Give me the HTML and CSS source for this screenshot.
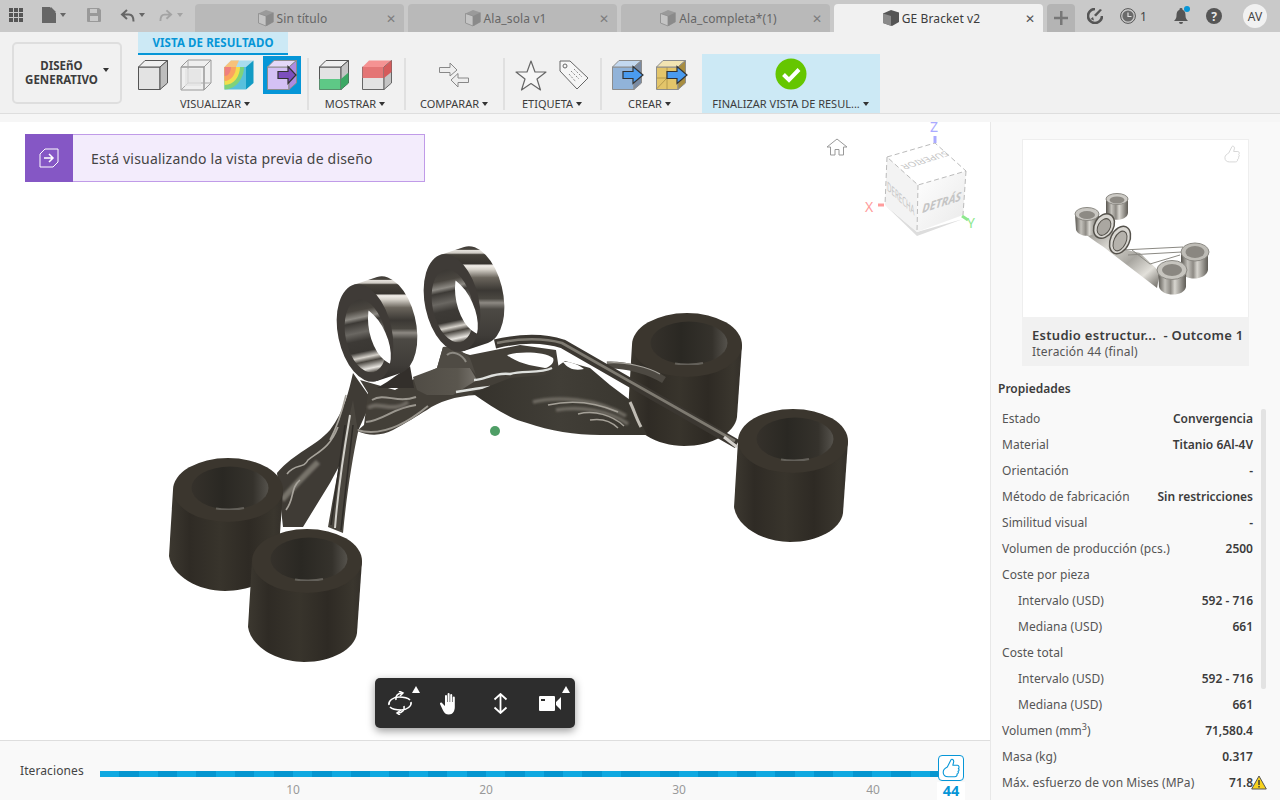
FILE: index.html
```html
<!DOCTYPE html>
<html lang="es">
<head>
<meta charset="utf-8">
<title>GE Bracket v2</title>
<link rel="stylesheet" href="styles.css">
</head>
<body>
<svg class="defs" width="0" height="0" aria-hidden="true">
  <defs>
    <symbol id="doc3d" viewBox="0 0 18 18"><path d="M9 1 16.500 3.500V13L10 17 1.500 14V4.500Z" fill="#9a9a9a"/><path d="M1.500 4.500 9 7V17L1.500 14Z" fill="#c4c4c4" stroke="#8d8d8d" stroke-width=".8"/><path d="M9 7 16.500 3.500V13L9 17Z" fill="#8a8a8a"/></symbol>
    <symbol id="thumb" viewBox="0 0 24 24"><path d="M8 11 12 3C13 1.800 15 3 15 5L14 9H19C21 9 21.200 12 20 12.500 21.200 13.500 21 15.500 19.500 15.500 20.500 16.500 20 18.500 18.500 18.500 19 20 18 21.500 16 21.500H9C6 21.500 3.500 20 3.500 16.500 3.500 13.500 6 12 8 11Z" fill="none" stroke="currentColor" stroke-width="1.200" stroke-linejoin="round"/></symbol>
    <linearGradient id="cylSide" x1="0" x2="1" y1="0" y2="0">
      <stop offset="0" stop-color="#3c3830"/><stop offset=".18" stop-color="#2f2b25"/><stop offset=".45" stop-color="#38342c"/><stop offset=".7" stop-color="#2e2a24"/><stop offset=".92" stop-color="#3a362e"/><stop offset="1" stop-color="#34302a"/>
    </linearGradient>
    <linearGradient id="holeIn" x1="0" x2="1" y1="0" y2="0">
      <stop offset="0" stop-color="#35312b"/><stop offset=".4" stop-color="#2a2823"/><stop offset=".8" stop-color="#35322c"/><stop offset="1" stop-color="#55524c"/>
    </linearGradient>
    <linearGradient id="band" x1="0" x2="0" y1="0" y2="1">
      <stop offset="0" stop-color="#3d3934"/><stop offset=".03" stop-color="#4a463f"/><stop offset=".04" stop-color="#e4e0da"/><stop offset=".065" stop-color="#cfcbc4"/><stop offset=".08" stop-color="#45413a"/><stop offset=".165" stop-color="#38342f"/><stop offset=".185" stop-color="#f2eee8"/><stop offset=".22" stop-color="#d8d4cc"/><stop offset=".3" stop-color="#6a655c"/><stop offset=".42" stop-color="#3b3834"/><stop offset=".5" stop-color="#4a4741"/><stop offset=".54" stop-color="#8d8983"/><stop offset=".6" stop-color="#4c4944"/><stop offset=".85" stop-color="#3f3c38"/><stop offset="1" stop-color="#2f2c29"/>
    </linearGradient>
    <linearGradient id="inner" x1="0" x2="0" y1="0" y2="1">
      <stop offset="0" stop-color="#3c3935"/><stop offset=".14" stop-color="#4a4640"/><stop offset=".24" stop-color="#8d8a84"/><stop offset=".3" stop-color="#3d3a36"/><stop offset=".44" stop-color="#6a6762"/><stop offset=".55" stop-color="#3d3a36"/><stop offset=".7" stop-color="#3a3733"/><stop offset=".78" stop-color="#d5d1ca"/><stop offset=".84" stop-color="#4a4640"/><stop offset=".94" stop-color="#e8e5e0"/><stop offset="1" stop-color="#55514b"/>
    </linearGradient>
    <linearGradient id="wing" x1="0" x2="1" y1="0" y2="0">
      <stop offset="0" stop-color="#35322c"/><stop offset=".5" stop-color="#413e37"/><stop offset="1" stop-color="#38352e"/>
    </linearGradient>
    <linearGradient id="plate" x1="0" x2="1" y1="0" y2="0">
      <stop offset="0" stop-color="#504c45"/><stop offset=".7" stop-color="#5a564e"/><stop offset="1" stop-color="#77736c"/>
    </linearGradient>
    <linearGradient id="silver" x1="0" x2="1" y1="0" y2="0">
      <stop offset="0" stop-color="#57544e"/><stop offset=".25" stop-color="#c4c2bc"/><stop offset=".45" stop-color="#8d8a84"/><stop offset=".6" stop-color="#d8d6d0"/><stop offset="1" stop-color="#5f5c56"/>
    </linearGradient>
    <linearGradient id="silverBody" x1="0" x2="1" y1="0" y2="1">
      <stop offset="0" stop-color="#77746e"/><stop offset=".35" stop-color="#d9d7d1"/><stop offset=".6" stop-color="#a8a6a0"/><stop offset=".8" stop-color="#e2e0da"/><stop offset="1" stop-color="#66635d"/>
    </linearGradient>
    <linearGradient id="cubeFront" x1="0" x2="1" y1="0" y2="1">
      <stop offset="0" stop-color="#fff"/><stop offset="1" stop-color="#e9e9e9"/>
    </linearGradient>
    <filter id="soft" x="-10%" y="-10%" width="120%" height="120%"><feGaussianBlur stdDeviation=".7"/></filter>
    <filter id="softer" x="-10%" y="-20%" width="120%" height="140%"><feGaussianBlur stdDeviation="1.300"/></filter>
    <symbol id="cyl" viewBox="-62 -34 124 138" overflow="visible">
      <path d="M-55 0-59 66C-56 86-30 101-3 101 25 101 48 88 50 72L55 0Z" fill="url(#cylSide)"/>
      <ellipse rx="55" ry="32" fill="#3b362e"/>
      <ellipse cx="2" cy="-2" rx="38.500" ry="21.500" fill="url(#holeIn)"/>
      <path d="M-12 18.500C-5 20 8 20 16 18" fill="none" stroke="#64615a" stroke-width="2" filter="url(#soft)"/>
    </symbol>
  </defs>
</svg>

<header class="topbar">
  <div class="quick">
    <svg class="q-apps" width="14" height="14" viewBox="0 0 14 14"><path fill="#555" d="M0 0h4v4H0zM5 0h4v4H5zM10 0h4v4h-4zM0 5h4v4H0zM5 5h4v4H5zM10 5h4v4h-4zM0 10h4v4H0zM5 10h4v4H5zM10 10h4v4h-4z"/></svg>
    <svg class="q-file" width="14" height="16" viewBox="0 0 14 16"><path fill="#666" d="M0 0h8l6 6v10H0zM9 0l5 5H9z"/></svg>
    <span class="caret q-caret"></span>
    <svg class="q-save" width="14" height="14" viewBox="0 0 14 14"><path fill="#999" fill-rule="evenodd" d="M0 1a1 1 0 0 1 1-1h11l2 2v11a1 1 0 0 1-1 1H1a1 1 0 0 1-1-1zM3 1v4h7V1zM3 8v5h8V8z"/></svg>
    <svg class="q-undo" width="15" height="13" viewBox="0 0 15 13"><path fill="none" stroke="#666" stroke-width="2" d="M7 1 2 5.500 7 10M2 5.500H9C12 5.500 13.500 8 13.500 12.500"/></svg>
    <span class="caret q-caret"></span>
    <svg class="q-redo" width="14" height="13" viewBox="0 0 15 13"><path fill="none" stroke="#a3a3a3" stroke-width="2" d="M8 1 13 5.500 8 10M13 5.500H6C3 5.500 1.500 8 1.500 12.500"/></svg>
    <span class="caret q-caret light"></span>
  </div>
  <nav class="tabs">
    <div class="tab"><div class="tab-mid"><svg width="18" height="18"><use href="#doc3d"/></svg><span>Sin título</span></div><span class="tab-x">✕</span></div>
    <div class="tab"><div class="tab-mid"><svg width="18" height="18"><use href="#doc3d"/></svg><span>Ala_sola v1</span></div><span class="tab-x">✕</span></div>
    <div class="tab"><div class="tab-mid"><svg width="18" height="18"><use href="#doc3d"/></svg><span>Ala_completa*(1)</span></div><span class="tab-x">✕</span></div>
    <div class="tab active"><div class="tab-mid"><svg width="18" height="18" viewBox="0 0 18 18"><path d="M9 1 17 3.500V13L10 17 1 14V4.500Z" fill="#555"/><path d="M1 4.500 9 7V17L1 14Z" fill="#8a8a8a"/></svg><span>GE Bracket v2</span></div><span class="tab-x">✕</span></div>
    <div class="tab-add"><svg width="14" height="14" viewBox="0 0 14 14"><path fill="#777" d="M6 0h2.500v5.800H14v2.500H8.500V14H6V8.300H0V5.800h6z"/></svg></div>
  </nav>
  <div class="status">
    <svg class="s-a" width="16" height="16" viewBox="0 0 16 16"><path d="M8 1a7 7 0 1 0 7 7" fill="none" stroke="#555" stroke-width="2.600"/><path d="M15 2 9 8.500 7 7l6-6z" fill="#555"/><path d="M3.500 11 6 9l1 3.500z" fill="#555"/></svg>
    <svg class="s-b" width="16" height="16" viewBox="0 0 16 16"><circle cx="8" cy="8" r="7.400" fill="none" stroke="#555"/><circle cx="8" cy="8" r="5.600" fill="#6a6a6a"/><path d="M8 4.500V8.500H11.500" fill="none" stroke="#ddd" stroke-width="1.200"/></svg>
    <span class="s-count">1</span>
    <span class="s-bell"><svg width="14" height="16" viewBox="0 0 14 16"><path fill="#555" d="M7 0a1.500 1.500 0 0 1 1.500 1.700C11 2.500 11.500 5 11.500 7.500c0 2.500.8 3.800 2.500 5.500H0c1.700-1.700 2.500-3 2.500-5.500C2.500 5 3 2.500 5.500 1.700A1.500 1.500 0 0 1 7 0zM5 14h4a2 2 0 0 1-4 0z"/></svg><i class="s-dot"></i></span>
    <span class="s-help">?</span>
    <span class="s-avatar">AV</span>
  </div>
</header>

<section class="toolbar">
  <button class="panel-btn"><span>DISEñO<br>GENERATIVO</span><i class="caret dark"></i></button>
  <div class="ribbon">
    <div class="ctx-tab">VISTA DE RESULTADO</div>
    <div class="groups">
      <div class="group g-vis">
        <div class="icons">
          <svg width="30" height="30" viewBox="0 0 30 30"><path d="M.5 7h21.500v22.500H.5z" fill="#e3e3e3" stroke="#555"/><path d="M.5 7 7 .5H29.500L22 7z" fill="#efefef" stroke="#555"/><path d="M22 7 29.500.5V23L22 29.500z" fill="#bdbdbd" stroke="#555"/></svg>
          <svg class="ml12" width="32" height="32" viewBox="0 0 32 32"><path d="M1 8h23v23H1zM1 8 8 1h23L24 8zM24 8l7-7v23l-7 7z" fill="#efefef" stroke="#999"/><path d="M8 1v23h23M8 24l-7 7" fill="none" stroke="#aaa"/><path d="M5 10h16v17H5z" fill="#e3e3e3" opacity=".7"/></svg>
          <svg class="ml12" width="30" height="30" viewBox="0 0 30 30"><path d="M.5 7h21.500v22.500H.5z" fill="#58c0dd"/><path d="M.5 7H20C20 18 12 29.500.5 29.500z" fill="#7fd27a"/><path d="M.5 7H16C16 16 10 25 .5 25z" fill="#f3de4d"/><path d="M.5 7H12C12 14 7 21 .5 21z" fill="#fba35f"/><path d="M.5 7H7C7 11 5 16 .5 16z" fill="#ef7f7f"/><path d="M.5 7 7 .5H29.500L22 7z" fill="#a9dcee"/><path d="M.5 7 7 .5H15L12 7z" fill="#f7c27a"/><path d="M22 7 29.500.5V23L22 29.500z" fill="#129bc4"/></svg>
          <div class="active-ic"><svg width="30" height="30" viewBox="0 0 30 30"><path d="M.5 7h21.500v22.500H.5z" fill="#d4c1f4" stroke="#8d8d8d"/><path d="M.5 7 7 .5H29.500L22 7z" fill="#e4d9f8" stroke="#8d8d8d"/><path d="M22 7 29.500.5V23L22 29.500z" fill="#ad8be0" stroke="#8d8d8d"/><path d="M11 11.500H21V6.500L29 15 21 23.500V18.500H11z" fill="#7d4fbe" stroke="#333" stroke-width="1.200"/></svg></div>
        </div>
        <div class="g-label">VISUALIZAR<i class="caret dark"></i></div>
      </div>
      <i class="sep"></i>
      <div class="group g-show">
        <div class="icons">
          <svg width="30" height="30" viewBox="0 0 30 30"><path d="M.5 7h21.500v22.500H.5z" fill="#e3e3e3" stroke="#555"/><path d="M.5 19H22V29.500H.5z" fill="#5ec886"/><path d="M.5 7 7 .5H29.500L22 7z" fill="#efefef" stroke="#555"/><path d="M22 7 29.500.5V23L22 29.500z" fill="#c4c4c4" stroke="#555"/><path d="M22 19 29.500 12.500V23L22 29.500z" fill="#3ca864"/></svg>
          <svg class="ml13" width="30" height="30" viewBox="0 0 30 30"><path d="M.5 7h21.500v22.500H.5z" fill="#e3e3e3" stroke="#666"/><path d="M.5 7H22V18H.5z" fill="#e47575"/><path d="M.5 7 7 .5H29.500L22 7z" fill="#f59292"/><path d="M22 7 29.500.5V23L22 29.500z" fill="#c4c4c4" stroke="#666"/><path d="M22 7 29.500.5V12L22 18z" fill="#d55b5b"/></svg>
        </div>
        <div class="g-label">MOSTRAR<i class="caret dark"></i></div>
      </div>
      <i class="sep"></i>
      <div class="group g-cmp">
        <div class="icons">
          <svg width="30" height="26" viewBox="0 0 30 26"><path d="M.5 5.500H11V1L18 8 11 14V10.500H.5z" fill="#eee" stroke="#888"/><path d="M29.500 16H19V11.500L12 18 19 25V20.500H29.500z" fill="#eee" stroke="#888"/></svg>
        </div>
        <div class="g-label">COMPARAR<i class="caret dark"></i></div>
      </div>
      <i class="sep"></i>
      <div class="group g-tag">
        <div class="icons">
          <svg width="32" height="31" viewBox="0 0 32 31"><path d="M16 1 20 12H31L22 19 25.500 30 16 23.500 6.500 30 10 19 1 12H12Z" fill="#f6f6f6" stroke="#666" stroke-width="1.200" stroke-linejoin="round"/></svg>
          <svg class="ml12" width="30" height="30" viewBox="0 0 30 30"><path d="M1 1H11L29 18 18 29 1 11Z" fill="#f6f6f6" stroke="#666" stroke-linejoin="round"/><circle cx="6" cy="6" r="2" fill="none" stroke="#666"/><path d="M12 11 20 19M10 14 17 22M15 9 23 17" stroke="#888" stroke-dasharray="2 1.500"/></svg>
        </div>
        <div class="g-label">ETIQUETA<i class="caret dark"></i></div>
      </div>
      <i class="sep"></i>
      <div class="group g-make">
        <div class="icons">
          <svg width="32" height="30" viewBox="0 0 32 30"><path d="M.5 7h21.500v22.500H.5z" fill="#91b3d9" stroke="#8d8d8d"/><path d="M.5 7 7 .5H29.500L22 7z" fill="#c3d8ef" stroke="#8d8d8d"/><path d="M22 7 29.500.5V23L22 29.500z" fill="#7a8ba3" stroke="#8d8d8d"/><path d="M11 11.500H21V6.500L31 15 21 23.500V18.500H11z" fill="#4a9bef" stroke="#333" stroke-width="1.200"/></svg>
          <svg class="ml12" width="32" height="30" viewBox="0 0 32 30"><path d="M.5 7h21.500v22.500H.5z" fill="#e3c56a" stroke="#8d8d8d"/><path d="M.5 18H22M11 7V29.500M.5 29 11 18" stroke="#a88f46" stroke-width=".8"/><path d="M.5 7 7 .5H29.500L22 7z" fill="#f2e4b2" stroke="#8d8d8d"/><path d="M22 7 29.500.5V23L22 29.500z" fill="#a88d40" stroke="#8d8d8d"/><path d="M11 11.500H21V6.500L31 15 21 23.500V18.500H11z" fill="#4a9bef" stroke="#333" stroke-width="1.200"/></svg>
        </div>
        <div class="g-label">CREAR<i class="caret dark"></i></div>
      </div>
      <div class="group g-done">
        <div class="icons">
          <svg width="32" height="32" viewBox="0 0 32 32"><circle cx="16" cy="16" r="15.500" fill="#65c600"/><path d="M8.500 16.500 14 22 24 11.500" fill="none" stroke="#fff" stroke-width="4"/></svg>
        </div>
        <div class="g-label">FINALIZAR VISTA DE RESUL...<i class="caret dark"></i></div>
      </div>
    </div>
  </div>
</section>
<div class="strip"></div>

<main class="workspace">
  <section class="viewport">
    <div class="canvas">
      <svg class="model" width="990" height="618" viewBox="0 122 990 618">
        <!-- left arm -->
        <path d="M353 373C349 390 345 410 330 430 315 447 295 452 277 473L283 527 303 527 330 483 357 433 372 400Z" fill="#3f3b35"/>
        <path d="M282 500C290 490 300 480 318 462" fill="none" stroke="#77736b" stroke-width="6" filter="url(#softer)"/>
        <path d="M286 510C295 498 290 488 300 480M287 474C296 462 303 470 308 460 318 452 330 448 338 427M346 395C342 412 338 425 330 440" fill="none" stroke="#a8a49c" stroke-width="1.600" filter="url(#soft)"/>
        <!-- central body -->
        <path d="M360 380 368 393 364 425 357 431C368 436 382 436 393 430 405 424 418 415 427 410 438 402 455 396 477 395L520 380 560 376 556 350 520 345 470 355 443 347 437 368 412 380 395 390Z" fill="#433f38"/>
        <path d="M413 377 437 368 470 368 477 380 453 395 427 395 417 390Z" fill="url(#plate)"/>
        <path d="M437 368 443 347C452 345 465 352 470 358L476 375 470 368Z" fill="#4f4b44"/>
        <path d="M447 355C452 350 462 354 466 362" fill="none" stroke="#8d8a83" stroke-width="2" filter="url(#soft)"/>
        <path d="M387 382 410 366 414 388 377 388Z" fill="#332f2b"/>
        <path d="M372 400C385 392 396 404 416 397M366 422C385 420 392 408 416 405M357 430C380 437 405 425 428 406" fill="none" stroke="#9b978f" stroke-width="2" filter="url(#soft)"/>
        <path d="M368 408C378 400 392 414 408 402" fill="none" stroke="#6f6b63" stroke-width="4" filter="url(#softer)"/>
        <path d="M474 380C484 380 494 372 510 374 522 370 540 374 552 368M456 392C470 390 478 388 490 387" fill="none" stroke="#dfe1de" stroke-width="2.400" filter="url(#soft)"/>
        <path d="M507 355C520 351 545 352 553 358 555 362 550 367 545 368 530 366 515 362 507 355Z" fill="#fff"/>
        <!-- cylinder C -->
        <use href="#cyl" x="625" y="311" width="124" height="138"/>
        <!-- wing -->
        <path d="M472 393C490 405 507 418 527 423 550 431 575 435 600 435L647 435 642 425C638 412 634 405 630 400L610 385 590 368 565 361 545 375 510 378Z" fill="url(#wing)"/>
        <path d="M533 402C556 396 596 398 626 416M556 410C580 406 608 410 628 424" fill="none" stroke="#6e6a62" stroke-width="3.500" filter="url(#softer)"/>
        <path d="M578 414C595 410 612 415 624 426M590 420C602 418 612 422 618 428M548 405C570 400 595 402 618 412" fill="none" stroke="#a5a198" stroke-width="1.500" filter="url(#soft)"/>
        <path d="M630 402C634 410 636 418 641 427" fill="none" stroke="#c0bcb4" stroke-width="3" filter="url(#soft)"/>
        <path d="M563 362C568 361 578 364 584 369 575 371 568 369 563 362Z" fill="#fff"/>
        <path d="M607 365C625 364 650 371 664 380" fill="none" stroke="#4d4942" stroke-width="7"/>
        <path d="M607 363C625 361 650 368 660 374" fill="none" stroke="#a5a29b" stroke-width="1.200"/>
        <!-- top strut -->
        <path d="M495 344C520 338 545 338 563 344L737 444" fill="none" stroke="#3b3731" stroke-width="9"/>
        <path d="M497 343C520 338 545 338 562 343L735 441" fill="none" stroke="#7e7a71" stroke-width="2.600" filter="url(#soft)"/>
        <path d="M737 447 724 437" stroke="#d6d3ce" stroke-width="3"/>
        <!-- cylinder D -->
        <use href="#cyl" x="731" y="407" width="124" height="138"/>
        <!-- strut to B -->
        <path d="M353 400C346 430 336 480 328 527L343 533C346 500 352 460 358 432Z" fill="#4a463f"/>
        <path d="M350 415C344 450 338 490 335 528" fill="none" stroke="#d2d0ca" stroke-width="2"/>
        <path d="M345 425 331 525M353 425 341 530" stroke="#2e2b27" stroke-width="1.500"/>
        <!-- cylinders A, B -->
        <use href="#cyl" x="166" y="456" width="124" height="138"/>
        <use href="#cyl" x="245" y="527" width="124" height="138"/>
        <!-- ring 1 -->
        <path d="M353.100 285 377.100 277A27 49.500-12 0 1 400.900 373L376.900 381Z" fill="url(#band)"/>
        <g transform="rotate(-12 365 333)">
          <ellipse cx="365" cy="333" rx="27" ry="49.500" fill="#3f3b37"/>
          <ellipse cx="365" cy="336" rx="20" ry="37" fill="url(#inner)"/>
        </g>
        <clipPath id="hole1"><ellipse cx="365" cy="336" rx="20" ry="37" transform="rotate(-12 365 336)"/></clipPath>
        <ellipse cx="389" cy="328" rx="20" ry="37" transform="rotate(-12 389 328)" fill="#fff" clip-path="url(#hole1)"/>
        <!-- ring 2 -->
        <path d="M440.100 255 464.100 247A27 49.500-12 0 1 487.900 343L463.900 351Z" fill="url(#band)"/>
        <g transform="rotate(-12 452 303)">
          <ellipse cx="452" cy="303" rx="27" ry="49.500" fill="#3f3b37"/>
          <ellipse cx="452" cy="306" rx="20" ry="37" fill="url(#inner)"/>
        </g>
        <clipPath id="hole2"><ellipse cx="452" cy="306" rx="20" ry="37" transform="rotate(-12 452 306)"/></clipPath>
        <ellipse cx="476" cy="298" rx="20" ry="37" transform="rotate(-12 476 298)" fill="#fff" clip-path="url(#hole2)"/>
        <circle cx="495" cy="431" r="5" fill="#4f9e66"/>
      </svg>

      <svg class="home" width="22" height="18" viewBox="0 0 22 18"><path d="M1 9 11 1 21 9H17.500V17H13V11.500H9V17H4.500V9Z" fill="#fff" stroke="#999" stroke-linejoin="round"/></svg>

      <svg class="cube" width="120" height="125" viewBox="860 118 120 125">
        <path d="M885 205 917 236 963 219 917 232Z" fill="#ddd"/>
        <path d="M887 157 918 185 917 232 885 205Z" fill="#f3f3f3"/>
        <path d="M918 185 966 171 963 215 917 232Z" fill="url(#cubeFront)"/>
        <path d="M887 157 935 143 966 171 918 185Z" fill="#fff"/>
        <path d="M887 157 935 143 966 171 918 185ZM918 185 917 232M966 171 963 215M887 157 885 205" fill="none" stroke="#bbb" stroke-dasharray="5 3"/>
        <text class="cube-t" transform="matrix(-.85 .27 -.6 -.55 945 151)">SUPERIOR</text>
        <text class="cube-t bold" transform="matrix(.92 -.3 -.08 1 922 213)">DETRÁS</text>
        <text class="cube-t" transform="matrix(.56 .52 0 1.150 887 190)">DERECHA</text>
        <path d="M935 136V143" stroke="#aaaaff" stroke-width="3"/>
        <text class="axis z" x="930" y="132">Z</text>
        <path d="M878 205 884 205" stroke="#ff9c9c" stroke-width="3"/>
        <text class="axis x" x="865" y="212">X</text>
        <path d="M962 216 968 220" stroke="#8ee88e" stroke-width="3"/>
        <text class="axis y" x="967" y="228">Y</text>
      </svg>

      <aside class="banner">
        <span class="banner-ic"><svg width="20" height="20" viewBox="0 0 20 20"><path d="M1 6 6 1H19V14L14 19H1Z" fill="none" stroke="#fff"/><path d="M5 10H14M10 6 14 10 10 14" fill="none" stroke="#fff" stroke-width="1.500"/></svg></span>
        <span class="banner-t">Está visualizando la vista previa de diseño</span>
      </aside>

      <div class="navbar">
        <span class="nav-cell"><svg width="26" height="24" viewBox="0 0 26 24"><path d="M2 14C1 10 6 6 12 6 16 6 21 7 23 9M24 11C25 15 20 19 14 19 10 19 5 18 3 16" fill="none" stroke="#fff" stroke-width="1.600"/><path d="M9 9C8 5 11 2 15 2M17 15C18 19 15 22 11 22" fill="none" stroke="#fff" stroke-width="1.600"/><path d="M12 0 16 2 13 5M14 19 10 22 13 24" fill="none" stroke="#fff" stroke-width="1.500"/></svg><i class="nav-tri"></i></span>
        <span class="nav-cell"><svg width="20" height="23" viewBox="0 0 20 23"><path fill="#fff" d="M5 4a1 1 0 0 1 2 0v6h.6V2a1 1 0 0 1 2 0v8h.6V3a1 1 0 0 1 2 0v7h.6V5.500a1 1 0 0 1 2 0V15c0 4-2 7.500-6 7.500-3 0-4.500-1.500-6-4.500L0 12c-.5-1 1-2 2-1l3 3z"/></svg></span>
        <span class="nav-cell"><svg width="15" height="21" viewBox="0 0 15 21"><path d="M7.500 1V20M1.500 6.500 7.500 1 13.500 6.500M1.500 14.500 7.500 20 13.500 14.500" fill="none" stroke="#fff" stroke-width="1.800"/></svg></span>
        <span class="nav-cell"><svg width="22" height="15" viewBox="0 0 22 15"><path fill="#fff" fill-rule="evenodd" d="M1 0H15a1 1 0 0 1 1 1V14a1 1 0 0 1-1 1H1a1 1 0 0 1-1-1V1a1 1 0 0 1 1-1zM2 3V5H6V3zM17 6 22 1V14L17 9Z"/></svg><i class="nav-tri"></i></span>
      </div>
    </div>

    <footer class="slider">
      <span class="slider-label">Iteraciones</span>
      <div class="track-wrap">
        <div class="track"></div>
        <span class="tick t10">10</span><span class="tick t20">20</span><span class="tick t30">30</span><span class="tick t40">40</span>
        <span class="knob"><svg width="22" height="22"><use href="#thumb"/></svg></span>
        <span class="knob-num">44</span>
      </div>
    </footer>
  </section>

  <aside class="side">
    <article class="card">
      <div class="card-img">
        <svg class="card-like" width="20" height="22"><use href="#thumb"/></svg>
        <svg width="227" height="178" viewBox="1022 139 227 178">
          <path d="M1083 232C1092 240 1102 245 1110 252L1157 288 1160 272 1140 253 1127 250 1105 222Z" fill="url(#silverBody)"/>
          <path d="M1122 250 1183 247 1182 252 1128 255M1132 250 1150 264 1180 255" fill="none" stroke="#8b8983"/>
          <path d="M1075 214 1076 230C1079 238 1097 238 1099 228V214Z" fill="url(#silver)"/>
          <ellipse cx="1087" cy="214" rx="12" ry="6.500" fill="#c9c7c2" stroke="#8b8983"/><ellipse cx="1087" cy="215" rx="8" ry="4" fill="#8d8a84"/>
          <path d="M1106 199V213C1108 222 1127 222 1128 213V199Z" fill="url(#silver)"/>
          <ellipse cx="1117" cy="199" rx="11" ry="5.500" fill="#cdcbc6" stroke="#8b8983"/><ellipse cx="1117" cy="200" rx="7.500" ry="3.500" fill="#8d8a84"/>
          <ellipse cx="1104" cy="226" rx="9.500" ry="13" transform="rotate(30 1104 226)" fill="#d9d7d2" stroke="#55524c" stroke-width="1.500"/>
          <ellipse cx="1104" cy="227" rx="6" ry="9" transform="rotate(30 1104 227)" fill="#aaa7a1" stroke="#55524c"/>
          <ellipse cx="1120" cy="240" rx="9.500" ry="14.500" transform="rotate(25 1120 240)" fill="#d9d7d2" stroke="#55524c" stroke-width="1.500"/>
          <ellipse cx="1120" cy="241" rx="6" ry="10.500" transform="rotate(25 1120 241)" fill="#b5b2ac" stroke="#55524c"/>
          <path d="M1181 252V272C1184 281 1206 281 1208 270V252Z" fill="url(#silver)"/>
          <ellipse cx="1195" cy="252" rx="14" ry="9" fill="#bebcb6" stroke="#8b8983"/><ellipse cx="1195" cy="252" rx="9.500" ry="6" fill="#8a8781"/>
          <path d="M1158 268 1159 287C1162 297 1184 297 1186 287V268Z" fill="url(#silver)"/>
          <ellipse cx="1172" cy="270" rx="15" ry="9.500" fill="#c6c4be" stroke="#8b8983"/><ellipse cx="1172" cy="270" rx="10" ry="6" fill="#8a8781"/>
        </svg>
      </div>
      <div class="card-foot">
        <div class="card-title">Estudio estructur... &nbsp;- Outcome 1</div>
        <div class="card-sub">Iteración 44 (final)</div>
      </div>
    </article>
    <h2 class="props-h">Propiedades</h2>
    <div class="props">
      <div class="row"><span>Estado</span><b>Convergencia</b></div>
      <div class="row"><span>Material</span><b>Titanio 6Al-4V</b></div>
      <div class="row"><span>Orientación</span><b>-</b></div>
      <div class="row"><span>Método de fabricación</span><b>Sin restricciones</b></div>
      <div class="row"><span>Similitud visual</span><b>-</b></div>
      <div class="row"><span>Volumen de producción (pcs.)</span><b>2500</b></div>
      <div class="row"><span>Coste por pieza</span></div>
      <div class="row sub"><span>Intervalo (USD)</span><b>592 - 716</b></div>
      <div class="row sub"><span>Mediana (USD)</span><b>661</b></div>
      <div class="row"><span>Coste total</span></div>
      <div class="row sub"><span>Intervalo (USD)</span><b>592 - 716</b></div>
      <div class="row sub"><span>Mediana (USD)</span><b>661</b></div>
      <div class="row"><span>Volumen (mm<sup>3</sup>)</span><b>71,580.4</b></div>
      <div class="row"><span>Masa (kg)</span><b>0.317</b></div>
      <div class="row"><span>Máx. esfuerzo de von Mises (MPa)</span><b>71.8</b>
        <svg class="warn" width="16" height="15" viewBox="0 0 16 15"><path d="M8 1 15.300 14H.7Z" fill="#f7d21c" stroke="#555" stroke-linejoin="round"/><path d="M8 5V10M8 11V12.500" stroke="#333" stroke-width="1.400"/></svg>
      </div>
    </div>
    <i class="scroll"></i>
  </aside>
</main>
</body>
</html>
```
FILE: styles.css
```css
* { box-sizing: border-box; }
html, body { margin: 0; height: 100%; }
body {
  display: flex;
  flex-direction: column;
  width: 1280px;
  height: 800px;
  overflow: hidden;
  font-family: "Noto Sans", "Open Sans", sans-serif;
  font-size: 12px;
  color: #3c3c3c;
  background: #fff;
}
.defs { position: absolute; }
i { display: block; font-style: normal; }

.caret { display: inline-block; width: 0; height: 0; border-left: 3.500px solid transparent; border-right: 3.500px solid transparent; border-top: 4px solid #666; }
.caret.light { border-top-color: #a3a3a3; }
.caret.dark { border-top-color: #333; }

/* top bar */
.topbar { display: flex; height: 32px; background: #c9c9c9; flex: none; }
.quick { display: flex; align-items: center; width: 195px; padding-left: 9px; padding-bottom: 2px; }
.q-file { margin-left: 19px; }
.q-caret { margin-left: 4px; }
.q-save { margin-left: 21px; }
.q-undo { margin-left: 19px; }
.q-redo { margin-left: 14px; }
.tabs { display: flex; align-items: flex-end; gap: 4px; height: 32px; }
.tab { display: flex; align-items: center; width: 209px; height: 28px; padding: 0 5px 0 6px; background: #b9b9b9; border-radius: 4px 4px 0 0; color: #666; letter-spacing: .1px; }
.tab.active { background: #f1f1f1; color: #3c3c3c; }
.tab-mid { display: flex; flex: 1; align-items: center; justify-content: center; gap: 2px; }
.tab-x { width: 16px; text-align: center; font-size: 12px; color: #7d7d7d; }
.tab.active .tab-x { color: #555; }
.tab-add { display: flex; align-items: center; justify-content: center; width: 28px; height: 28px; background: #b4b4b4; border-radius: 4px 4px 0 0; }
.status { display: flex; align-items: center; flex: 1; padding-left: 12px; }
.s-b { margin-left: 17px; }
.s-count { margin-left: 4px; color: #444; font-size: 12px; width: 8px; }
.s-bell { position: relative; display: flex; margin-left: 26px; }
.s-dot { position: absolute; right: -2px; top: -2px; width: 6px; height: 6px; border-radius: 50%; background: #0696d7; }
.s-help { display: flex; align-items: center; justify-content: center; width: 16px; height: 16px; margin-left: 18px; border-radius: 50%; background: #555; color: #e8e8e8; font-size: 12px; font-weight: 700; }
.s-avatar { display: flex; align-items: center; justify-content: center; width: 24px; height: 24px; margin-left: 21px; border-radius: 50%; background: #f1f1f1; color: #444; font-size: 12px; }

/* toolbar */
.toolbar { display: flex; flex: none; height: 82px; padding-left: 12px; background: #f1f1f1; border-bottom: 1px solid #dedede; }
.panel-btn { display: flex; align-items: center; justify-content: center; gap: 5px; width: 110px; height: 62px; margin-top: 10px; padding: 0; background: #f1f1f1; border: 2px solid #dedede; border-radius: 5px; font-family: inherit; font-size: 11.500px; font-weight: 700; line-height: 14px; color: #3c3c3c; }
.panel-btn .caret { margin-top: -6px; }
.ribbon { display: flex; flex-direction: column; flex: 1; }
.ctx-tab { width: 150px; height: 23px; margin-left: 16px; padding-top: 3px; background: #cce9f5; border-bottom: 2px solid #0696d7; color: #0696d7; font-size: 11.500px; font-weight: 700; line-height: 16px; text-align: center; letter-spacing: .1px; }
.groups { display: flex; flex: 1; }
.group { display: flex; flex-direction: column; align-items: center; }
.icons { display: flex; align-items: center; height: 38px; margin-top: 1px; }
.g-label { display: flex; align-items: center; gap: 3px; height: 17px; margin-top: 1px; font-size: 11px; color: #3c3c3c; white-space: nowrap; }
.sep { width: 2px; height: 52px; margin-top: 3px; background: #e0e0e0; }
.ml12 { margin-left: 12px; }
.ml13 { margin-left: 13px; }
.g-vis { width: 184.500px; align-items: flex-start; padding-left: 16px; }
.g-vis .g-label { margin-left: 42px; }
.active-ic { display: flex; align-items: center; justify-content: center; width: 38px; height: 38px; margin-left: 9px; background: #0696d7; }
.g-show { width: 95px; padding-right: 2px; }
.g-cmp { width: 97px; }
.g-tag { width: 95px; }
.g-make { width: 100px; padding-right: 4px; }
.g-done { width: 178px; margin-top: -1px; background: #cce9f5; }
.g-done .g-label { margin-top: 2px; }
.strip { flex: none; height: 8px; background: #f6f6f6; }

/* workspace */
.workspace { display: flex; flex: 1; min-height: 0; }
.viewport { display: flex; flex-direction: column; width: 990px; }
.canvas { position: relative; flex: 1; background: #fff; }
.model { position: absolute; left: 0; top: 0; }
.home { position: absolute; left: 826px; top: 16px; }
.cube { position: absolute; left: 860px; top: -4px; }
.cube-t { font-family: "Noto Sans", sans-serif; font-size: 11px; fill: #c4c4c4; }
.cube-t.bold { font-weight: 700; font-style: italic; font-size: 12px; }
.axis { font-family: "Noto Sans", sans-serif; font-size: 14px; }
.axis.z { fill: #aaaaff; }
.axis.x { fill: #ff9c9c; }
.axis.y { fill: #8ee88e; }

.banner { position: absolute; left: 25px; top: 12px; display: flex; width: 400px; height: 48px; background: #f3ecfc; border: 1px solid #c09be8; border-left: 0; }
.banner-ic { display: flex; align-items: center; justify-content: center; width: 48px; margin: -1px 0; background: #8557c5; }
.banner-t { align-self: center; margin-left: 18px; font-size: 14px; letter-spacing: .2px; color: #444; }

.navbar { position: absolute; left: 375px; top: 556px; display: flex; width: 200px; height: 50px; background: #2d2d2d; border-radius: 5px; box-shadow: 0 3px 8px rgba(0,0,0,.4); }
.nav-cell { position: relative; display: flex; align-items: center; justify-content: center; width: 50px; }
.nav-tri { position: absolute; right: 5px; top: 8px; width: 0; height: 0; border-left: 4px solid transparent; border-right: 4px solid transparent; border-bottom: 7px solid #fff; }

.slider { display: flex; flex: none; height: 60px; background: #f9f9f9; border-top: 1px solid #dedede; }
.slider-label { margin: 21px 0 0 20px; width: 80px; color: #444; letter-spacing: .1px; }
.track-wrap { position: relative; flex: 1; }
.track { position: absolute; left: 0; top: 30px; width: 840px; height: 5.500px; background: repeating-linear-gradient(90deg, #10a9e1 0 19.300px, #0696d0 19.300px 38.600px); }
.tick { position: absolute; top: 40px; width: 30px; margin-left: -15px; text-align: center; color: #999; }
.t10 { left: 193px; }
.t20 { left: 386px; }
.t30 { left: 579px; }
.t40 { left: 773px; }
.knob { position: absolute; left: 838px; top: 14px; display: flex; align-items: center; justify-content: center; width: 26px; height: 26px; background: #fff; border: 1px solid #0696d7; border-radius: 4px; color: #0696d7; }
.knob-num { position: absolute; left: 837px; top: 41px; width: 28px; height: 18px; background: #fff; color: #0696d7; font-size: 14.500px; font-weight: 700; line-height: 16px; text-align: center; }

/* right panel */
.side { position: relative; width: 290px; overflow: hidden; background: #f9f9f9; border-left: 1px solid #e8e8e8; }
.card { width: 227px; margin: 17px 0 0 31px; }
.card-img { position: relative; height: 178px; background: #fff; border: 1px solid #eee; border-bottom: 0; }
.card-img > svg:last-child { position: absolute; left: -1px; top: -1px; }
.card-like { position: absolute; right: 6px; top: 3px; color: #d8d8d8; z-index: 1; }
.card-foot { height: 49px; padding: 10px 0 0 10px; background: #f1f1f1; }
.card-title { font-weight: 600; font-size: 13px; letter-spacing: .3px; line-height: 17px; color: #3c3c3c; white-space: nowrap; }
.card-sub { font-size: 12px; letter-spacing: .2px; line-height: 16px; color: #555; }
.props-h { margin: 15px 0 0 7px; font-size: 12px; font-weight: 600; line-height: 16px; color: #3c3c3c; }
.props { margin: 8px 0 0; padding: 0 27px 0 11px; }
.row { position: relative; display: flex; justify-content: space-between; align-items: center; height: 26px; color: #555; white-space: nowrap; letter-spacing: .05px; }
.row.sub { padding-left: 16px; }
.row b { font-weight: 600; color: #3c3c3c; letter-spacing: 0; }
.row sup { font-size: 9px; line-height: 0; }
.warn { position: absolute; right: -14px; top: 6px; }
.scroll { position: absolute; left: 270px; top: 287px; width: 5px; height: 280px; background: #e3e3e3; border-radius: 2px; }
```
